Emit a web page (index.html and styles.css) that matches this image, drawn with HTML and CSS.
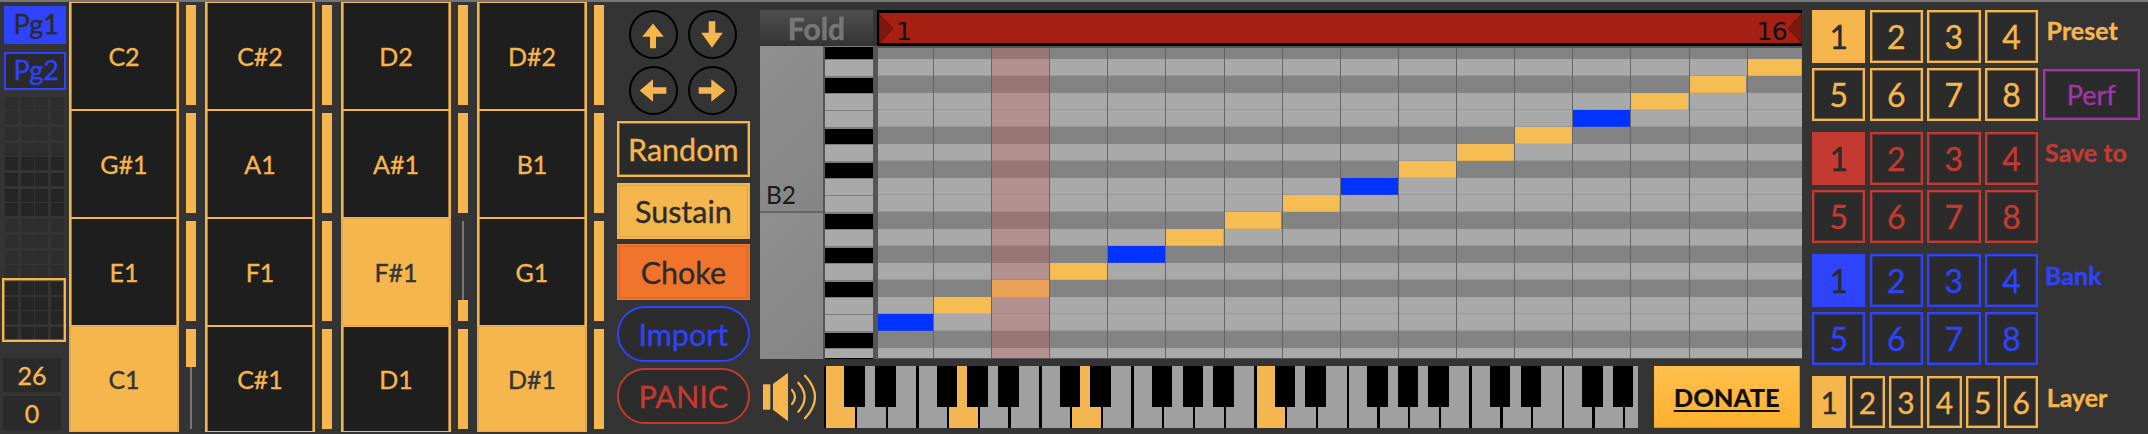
FILE: index.html
```html
<!DOCTYPE html>
<html lang="en">
<head>
<meta charset="utf-8">
<title>Step sequencer</title>
<link rel="stylesheet" href="styles.css">
</head>
<body>
<div class="app">

  <div class="left">
    <div class="pg pg-on">Pg1</div>
    <div class="pg pg-off">Pg2</div>
    <div class="mini">
      <i></i><i></i><i></i><i></i><i></i><i></i><i></i><i></i><i></i><i></i><i></i><i></i><i></i><i></i><i></i><i></i>
      <i></i><i></i><i></i><i></i><i></i><i></i><i></i><i></i><i></i><i></i><i></i><i></i><i></i><i></i><i></i><i></i>
      <i></i><i></i><i></i><i></i><i></i><i></i><i></i><i></i><i></i><i></i><i></i><i></i><i></i><i></i><i></i><i></i>
      <i></i><i></i><i></i><i></i><i></i><i></i><i></i><i></i><i></i><i></i><i></i><i></i><i></i><i></i><i></i><i></i>
      <div class="sel"></div>
    </div>
    <div class="num num-a">26</div>
    <div class="num">0</div>
  </div>

  <div class="pads">
    <div class="pad">C2</div><div class="fader"></div>
    <div class="pad">C#2</div><div class="fader"></div>
    <div class="pad">D2</div><div class="fader"></div>
    <div class="pad">D#2</div><div class="fader"></div>

    <div class="pad">G#1</div><div class="fader"></div>
    <div class="pad">A1</div><div class="fader"></div>
    <div class="pad">A#1</div><div class="fader"></div>
    <div class="pad">B1</div><div class="fader"></div>

    <div class="pad">E1</div><div class="fader"></div>
    <div class="pad">F1</div><div class="fader"></div>
    <div class="pad pad-on">F#1</div><div class="fader fader-low"><span class="track"></span><span class="fill fill-b"></span></div>
    <div class="pad">G1</div><div class="fader"></div>

    <div class="pad pad-on">C1</div><div class="fader fader-low"><span class="fill fill-a"></span><span class="track"></span></div>
    <div class="pad">C#1</div><div class="fader"></div>
    <div class="pad">D1</div><div class="fader"></div>
    <div class="pad pad-on">D#1</div><div class="fader"></div>
  </div>

  <div class="center">
    <div class="arrows">
      <div class="circle"><svg viewBox="-24 -24.5 48 49"><path class="arw" d="M0-11 L10.8 2.3 H3 V13.7 H-3 V2.3 H-10.8Z"/></svg></div>
      <div class="circle"><svg viewBox="-24 -24.5 48 49"><path class="arw" d="M-3.3-13.3 H3.3 V-1.7 H10.8 L0 13.3 L-10.8-1.7 H-3.3Z"/></svg></div>
      <div class="circle"><svg viewBox="-24 -24.5 48 49"><path class="arw" d="M-13.3 0 L0-11.3 V-3.3 H13.3 V3.3 H0 V11.3Z"/></svg></div>
      <div class="circle"><svg viewBox="-24 -24.5 48 49"><path class="arw" d="M13.3 0 L-.7-11.3 V-3.3 H-13.3 V3.3 H-.7 V11.3Z"/></svg></div>
    </div>
    <div class="btn btn-random">Random</div>
    <div class="btn btn-sustain">Sustain</div>
    <div class="btn btn-choke">Choke</div>
    <div class="btn btn-pill btn-import">Import</div>
    <div class="btn btn-pill btn-panic">PANIC</div>
  </div>

  <div class="stage">
    <div class="stage-top">
      <div class="fold">Fold</div>
      <div class="bar">
        <svg class="tri" viewBox="0 0 14 30"><path d="M0 0 L14 15 L0 30Z"/></svg>
        <span class="bar-start">1</span>
        <span class="bar-end">16</span>
        <svg class="tri" viewBox="0 0 14 30"><path d="M14 0 L0 15 L14 30Z"/></svg>
      </div>
    </div>

    <div class="stage-mid">
      <div class="panes">
        <div class="pane pane-a">B2</div>
        <div class="pane pane-b"></div>
      </div>
      <div class="keys">
        <div class="k k-b k-first"></div>
        <div class="k"></div><div class="k k-b"></div><div class="k"></div><div class="k"></div>
        <div class="k k-b"></div><div class="k"></div><div class="k k-b"></div><div class="k"></div>
        <div class="k"></div><div class="k k-b"></div><div class="k"></div><div class="k k-b"></div>
        <div class="k"></div><div class="k k-b"></div><div class="k"></div><div class="k"></div>
        <div class="k k-b"></div>
        <div class="k k-last"></div>
      </div>
      <div class="roll">
        <div class="strips">
          <div class="s s-d s-first"></div>
          <div class="s"></div><div class="s s-d"></div><div class="s"></div><div class="s"></div>
          <div class="s s-d"></div><div class="s"></div><div class="s s-d"></div><div class="s"></div>
          <div class="s"></div><div class="s s-d"></div><div class="s"></div><div class="s s-d"></div>
          <div class="s"></div><div class="s s-d"></div><div class="s"></div><div class="s"></div>
          <div class="s s-d"></div>
          <div class="s s-last"></div>
        </div>
        <div class="cols">
          <div class="col"></div><div class="col"></div><div class="col col-play"></div><div class="col"></div>
          <div class="col"></div><div class="col"></div><div class="col"></div><div class="col"></div>
          <div class="col"></div><div class="col"></div><div class="col"></div><div class="col"></div>
          <div class="col"></div><div class="col"></div><div class="col"></div><div class="col"></div>
        </div>
        <div class="notes">
          <div class="note note-blue" style="grid-area:17/1"></div>
          <div class="note" style="grid-area:16/2"></div>
          <div class="note note-play" style="grid-area:15/3"></div>
          <div class="note" style="grid-area:14/4"></div>
          <div class="note note-blue" style="grid-area:13/5"></div>
          <div class="note" style="grid-area:12/6"></div>
          <div class="note" style="grid-area:11/7"></div>
          <div class="note" style="grid-area:10/8"></div>
          <div class="note note-blue" style="grid-area:9/9"></div>
          <div class="note" style="grid-area:8/10"></div>
          <div class="note" style="grid-area:7/11"></div>
          <div class="note" style="grid-area:6/12"></div>
          <div class="note note-blue" style="grid-area:5/13"></div>
          <div class="note" style="grid-area:4/14"></div>
          <div class="note" style="grid-area:3/15"></div>
          <div class="note" style="grid-area:2/16"></div>
        </div>
      </div>
    </div>

    <div class="stage-bottom">
      <svg class="speaker" viewBox="0 0 56 50">
        <rect class="sp-fill" x="1" y="12.3" width="7.3" height="25.4"/>
        <path class="sp-fill" d="M11 12 L26 .7 V49.3 L11 37.7Z"/>
        <path class="sp-arc" d="M30 18 Q36 25 30 32"/>
        <path class="sp-arc" d="M36.3 10.7 Q49 25 36.3 39.7"/>
        <path class="sp-arc" d="M43 3.7 Q63 25 43 46.3"/>
      </svg>
      <div class="piano">
        <div class="w w-on"><b></b></div><div class="w"><b></b></div><div class="w"></div>
        <div class="w"><b></b></div><div class="w w-on"><b></b></div><div class="w"><b></b></div><div class="w"></div>
        <div class="w"><b></b></div><div class="w w-on"><b></b></div><div class="w"></div>
        <div class="w"><b></b></div><div class="w"><b></b></div><div class="w"><b></b></div><div class="w"></div>
        <div class="w w-on"><b></b></div><div class="w"><b></b></div><div class="w"></div>
        <div class="w"><b></b></div><div class="w"><b></b></div><div class="w"><b></b></div><div class="w"></div>
        <div class="w"><b></b></div><div class="w"><b></b></div><div class="w"></div>
        <div class="w"><b></b></div><div class="w"><b></b></div><div class="w"></div>
      </div>
      <div class="donate">DONATE</div>
    </div>
  </div>

  <div class="right">
    <div class="section">
      <div class="boxes c-orange">
        <div class="box box-on">1</div><div class="box">2</div><div class="box">3</div><div class="box">4</div>
        <div class="box">5</div><div class="box">6</div><div class="box">7</div><div class="box">8</div>
      </div>
      <div class="side">
        <div class="label c-orange label-preset">Preset</div>
        <div class="perf">Perf</div>
      </div>
    </div>
    <div class="section">
      <div class="boxes c-red">
        <div class="box box-on">1</div><div class="box">2</div><div class="box">3</div><div class="box">4</div>
        <div class="box">5</div><div class="box">6</div><div class="box">7</div><div class="box">8</div>
      </div>
      <div class="side side-tight">
        <div class="label c-red label-save">Save to</div>
      </div>
    </div>
    <div class="section">
      <div class="boxes c-blue">
        <div class="box box-on">1</div><div class="box">2</div><div class="box">3</div><div class="box">4</div>
        <div class="box">5</div><div class="box">6</div><div class="box">7</div><div class="box">8</div>
      </div>
      <div class="side side-tight">
        <div class="label c-blue">Bank</div>
      </div>
    </div>
    <div class="section section-layer">
      <div class="layers c-orange">
        <div class="box box-on">1</div><div class="box">2</div><div class="box">3</div>
        <div class="box">4</div><div class="box">5</div><div class="box">6</div>
      </div>
      <div class="side">
        <div class="label c-orange">Layer</div>
      </div>
    </div>
  </div>

</div>
</body>
</html>
```

FILE: styles.css
```css
* { box-sizing: border-box; }

html, body {
  margin: 0;
  padding: 0;
  width: 2148px;
  height: 434px;
  overflow: hidden;
  background: #343434;
}

body {
  font-family: "Lato", "Liberation Sans", sans-serif;
  color: #f5b64e;
  -webkit-text-stroke: .35px;
}

.app {
  display: flex;
  width: 2148px;
  height: 434px;
  border-top: 2px solid #777;
  background: #343434;
}

/* ---------- left column ---------- */
.left {
  flex: none;
  width: 69px;
  padding: 4px 0 0 3.8px;
  display: flex;
  flex-direction: column;
}

.pg {
  width: 62px;
  height: 38px;
  font-size: 27px;
  line-height: 36px;
  text-align: center;
  padding-left: 3px;
}
.pg-on { background: #2f43fb; color: #2a2a2a; }
.pg-off {
  margin-top: 8px;
  border: 2px solid #2f43fb;
  background: #2a2a2a;
  color: #2f43fb;
  line-height: 32px;
}

.mini {
  position: relative;
  margin: 7px 0 0 1.2px;
  width: 59px;
  height: 245px;
  display: grid;
  grid-template-columns: 16px 14px 16px 13px;
  grid-template-rows: 13.7px 16.3px 16px 14px 15.7px 16.3px 14px 16px 16px 15.7px 14.3px 17px 14.7px 14.3px 15.7px 13px;
}
.mini i {
  display: block;
  width: 13px;
  height: 13px;
  background: #2d2d2d;
}
.mini i:nth-child(n+17):nth-child(-n+32),
.mini i:nth-child(n+49):nth-child(-n+64) { background: #252525; }

.sel {
  position: absolute;
  left: -3px;
  top: 181px;
  width: 64px;
  height: 64px;
  border: 2px solid #f5b64e;
  box-shadow: inset 0 0 0 1px rgba(245, 182, 78, .4);
}

.num {
  width: 58px;
  height: 34px;
  margin: 4px 0 0 -.8px;
  background: #2a2a2a;
  font-size: 25px;
  line-height: 34px;
  text-align: center;
}
.num-a { margin-top: 16px; }

/* ---------- pads and faders ---------- */
.pads {
  flex: none;
  display: grid;
  width: 544px;
  grid-template-columns: repeat(4, 110px 26px);
  grid-template-rows: 108px 108px 108px 106px;
}

.pad {
  border: solid #f5b64e;
  border-width: 1px 2px;
  box-shadow: inset 1px 0 rgba(245, 182, 78, .6), inset -1px 0 rgba(245, 182, 78, .6);
  background: #1e1e1e;
  font-size: 25px;
  display: flex;
  align-items: center;
  justify-content: center;
}
.pad-on {
  background: #f5b64e;
  border-color: #e2a748;
  box-shadow: none;
  color: #343434;
}

.fader {
  width: 10.5px;
  height: 100px;
  margin: 3px 0 0 6.6px;
  background: #f5b64e;
}
.fader-low {
  background: none;
  display: flex;
  flex-direction: column;
  align-items: center;
}
.fill { display: block; align-self: stretch; background: #f5b64e; flex: none; }
.fill-a { height: 38px; }
.fill-b { height: 21px; }
.track { display: block; width: 2px; flex: 1; background: #777; }

/* ---------- centre buttons ---------- */
.center {
  flex: none;
  width: 133.3px;
  margin: 8px 0 0 3.7px;
  display: flex;
  flex-direction: column;
}

.arrows {
  display: grid;
  grid-template-columns: 49px 49px;
  grid-template-rows: 49px 49px;
  column-gap: 10px;
  row-gap: 7px;
  padding-left: 12px;
  margin-bottom: 6px;
}
.circle {
  border: 2px solid #000;
  border-radius: 50%;
  display: flex;
  align-items: center;
  justify-content: center;
}
.circle svg { display: block; flex: none; width: 48px; height: 49px; }
.arw { fill: #f5b64e; }

.btn {
  height: 56px;
  margin-bottom: 5.6px;
  font-size: 30.5px;
  display: flex;
  align-items: center;
  justify-content: center;
}
.btn-random {
  border: 2px solid #f5b64e;
  box-shadow: inset 0 0 0 1px rgba(245, 182, 78, .4);
  background: #2a2a2a;
  color: #f5b64e;
}
.btn-sustain {
  background: #f5b64e;
  color: #2c2c2c;
  box-shadow: inset 0 0 0 2px #f5b64e, inset 0 0 0 3px #e0a547;
}
.btn-choke {
  background: #f0742c;
  color: #2c2c2c;
  box-shadow: inset 0 0 0 2px #f0742c, inset 0 0 0 3px #d8682a;
}
.btn-pill { border-radius: 28px; background: #2c2c2c; border: 2px solid; }
.btn-import { border-color: #2f43fb; color: #2f43fb; margin-bottom: 6px; }
.btn-panic { border-color: #c13a30; color: #c53a30; }

/* ---------- sequencer stage ---------- */
.stage {
  flex: none;
  width: 1042px;
  margin: 8px 0 0 10px;
  display: flex;
  flex-direction: column;
}

.stage-top { display: flex; height: 36px; }

.fold {
  flex: none;
  width: 113px;
  background: linear-gradient(#4f4f4f, #343434);
  color: #777;
  font-size: 30px;
  font-weight: 700;
  line-height: 36px;
  text-align: center;
  -webkit-text-stroke: .5px;
}

.bar {
  flex: none;
  width: 925.3px;
  height: 35.3px;
  margin-left: 4px;
  margin-top: .4px;
  background: #a51f12;
  border: solid #000;
  border-width: 3px 0 3px 2px;
  display: flex;
  align-items: center;
  font-family: "DejaVu Sans", sans-serif;
  font-size: 25px;
  color: #111;
  -webkit-text-stroke: 0;
}
.tri { display: block; flex: none; width: 14px; height: 29px; }
.tri path { fill: #7c190f; stroke: #5b130a; stroke-width: 1; }
.bar-start, .bar-end {
  align-self: flex-end;
  line-height: 1;
  margin-bottom: -1px;
}
.bar-start { margin-left: 3px; }
.bar-end { margin-left: auto; margin-right: 1px; letter-spacing: -.5px; }

.stage-mid {
  display: flex;
  height: 313px;
  background: #555;
}

.panes {
  flex: none;
  width: 63px;
  display: flex;
  flex-direction: column;
  gap: 2px;
  background: #666;
}
.pane { background: linear-gradient(135deg, #8f8f8f, #858585); }
.pane-a {
  flex: none;
  height: 165px;
  font-size: 24.5px;
  color: #1a1a1a;
  padding-left: 6px;
  display: flex;
  align-items: flex-end;
  line-height: 1;
  padding-bottom: 4px;
  -webkit-text-stroke: 0;
}
.pane-b { flex: 1; }

.keys {
  flex: none;
  width: 48px;
  margin-left: 2px;
  display: flex;
  flex-direction: column;
  background: #7e7e7e;
}
.k {
  flex: none;
  height: 17px;
  border-bottom: 1px solid #7e7e7e;
  background: #a9a9a9;
}
.k-b { background: #000; border-top: 1px solid #7e7e7e; }
.k-first { height: 13px; border-top: 0; margin-top: .7px; }
.k-last { height: 10.3px; border-bottom: 1px solid #000; }

.roll {
  flex: none;
  width: 924px;
  height: 310px;
  margin: 2px 0 0 5px;
  display: grid;
}
.strips, .cols, .notes { grid-area: 1 / 1; }

.strips { display: flex; flex-direction: column; }
.s {
  flex: none;
  height: 17px;
  background: #a9a9a9;
  border-bottom: 1px solid #999;
}
.s-d { background: #838383; border-bottom: 0; }
.s-first { height: 11px; }
.s-last { height: 10px; border-bottom: 0; }

.cols,
.notes {
  display: grid;
  grid-template-columns: 56px repeat(14, 58.13px) 54.18px;
}
.notes { grid-template-rows: 11px repeat(17, 17px) 10px; }

.col { border-right: 1.4px solid #666; }
.col:last-child { border-right: 0; }
.col-play { background: rgba(200, 90, 80, .3); }

.note {
  background: #f6bd55;
  margin-right: 1.4px;
  border-bottom: 1px solid #e3ad50;
}
.note-blue { background: #0033ff; border-bottom-color: #1a3fe0; }
.note-play { background: #e9a257; border-bottom-color: #e9a257; }

.stage-bottom {
  display: flex;
  height: 62px;
  margin-top: 7px;
}

.speaker {
  flex: none;
  display: block;
  width: 56px;
  height: 50px;
  margin: 6px 6px 0 2px;
}
.sp-fill { fill: #f5b64e; }
.sp-arc { fill: none; stroke: #f5b64e; stroke-width: 2.2; stroke-linecap: round; }

.piano {
  flex: none;
  position: relative;
  width: 814px;
  height: 62px;
  padding-left: 2.4px;
  background: #000;
  display: flex;
  gap: 2.35px;
  overflow: hidden;
}
.w {
  position: relative;
  flex: none;
  width: 28.4px;
  background: #a0a0a0;
}
.w-on { background: #f4b650; }
.w b {
  position: absolute;
  z-index: 1;
  top: 0;
  right: -10.3px;
  width: 20.6px;
  height: 41px;
  background: #000;
}

.donate {
  flex: none;
  width: 146.5px;
  margin-left: 16px;
  background: linear-gradient(#ffc04f, #ffb02e);
  border-bottom: 1px solid #c9973f;
  border-right: 1px solid #c9973f;
  color: #111;
  font-size: 25.5px;
  font-weight: 900;
  text-decoration: underline;
  text-underline-offset: 3px;
  display: flex;
  align-items: center;
  justify-content: center;
  -webkit-text-stroke: 0;
}

/* ---------- right panel ---------- */
.right {
  flex: none;
  margin: 8px 0 0 10px;
  display: flex;
  flex-direction: column;
  gap: 11px;
}

.section { display: flex; }

.c-orange { color: #f5b64e; }
.c-red { color: #c53a30; }
.c-blue { color: #2f43fb; }

.boxes {
  flex: none;
  display: grid;
  grid-template-columns: repeat(4, 53.4px);
  grid-auto-rows: 53.4px;
  gap: 4.2px;
}
.layers {
  flex: none;
  display: grid;
  width: 226.2px;
  height: 52.4px;
  grid-template-columns: repeat(6, 34.4px);
  gap: 4px;
}

.box {
  border: 2px solid;
  background: #2b2b2b;
  font-size: 32px;
  display: flex;
  align-items: center;
  justify-content: center;
}

.c-orange .box { border-color: #f5b64e; color: #f5b64e; box-shadow: inset 0 0 0 1px rgba(245, 182, 78, .4); }
.c-red .box { border-color: #c53a30; color: #c53a30; box-shadow: inset 0 0 0 1px rgba(197, 58, 48, .4); }
.c-blue .box { border-color: #2f43fb; color: #2f43fb; box-shadow: inset 0 0 0 1px rgba(47, 67, 251, .4); }
.c-orange .box-on { background: #f5b64e; color: #2b2b2b; box-shadow: none; }
.c-red .box-on { background: #c53a30; color: #2b2b2b; box-shadow: none; }
.c-blue .box-on { background: #2f43fb; color: #2b2b2b; box-shadow: none; }

.layers .box { font-size: 30px; }

.side {
  flex: none;
  margin-left: 8.5px;
  display: flex;
  flex-direction: column;
}
.side-tight { margin-left: 7px; }

.label {
  font-size: 25px;
  font-weight: 700;
  line-height: 30px;
  margin-top: 6px;
}
.label-preset { height: 36px; margin-top: 5px; margin-bottom: 1px; }
.label-save { margin-top: 5px; }

.perf {
  width: 97.3px;
  height: 51px;
  margin: 17px 0 0 -4px;
  border: 2px solid #a335aa;
  box-shadow: inset 0 0 0 1px rgba(163, 53, 170, .4);
  background: #2b2b2b;
  color: #a335aa;
  font-size: 27px;
  display: flex;
  align-items: center;
  justify-content: center;
}
```
